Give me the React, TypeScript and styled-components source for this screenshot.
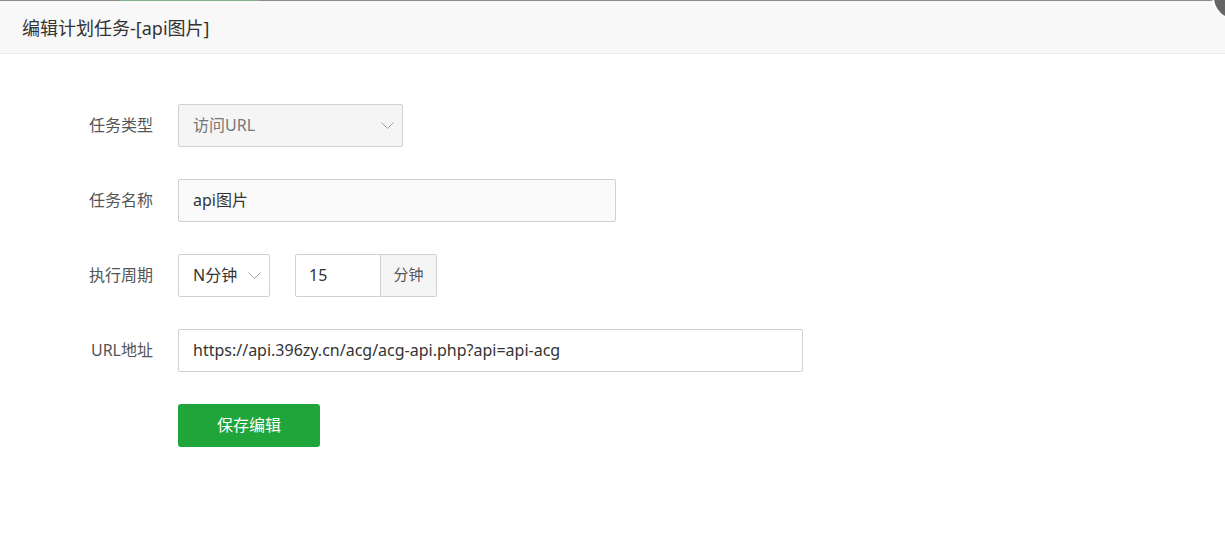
import React from 'react'
import styled, { createGlobalStyle } from 'styled-components'

const GlobalStyle = createGlobalStyle`
  html, body {
    margin: 0;
    padding: 0;
    background: #fff;
  }
  body {
    font-family: "Noto Sans", "Noto Sans CJK SC", sans-serif;
    color: #333;
  }
`

const Page = styled.div`
  position: relative;
  width: 1225px;
  height: 550px;
  overflow: hidden;
  background: #fff;
`

const TopStrip = styled.div`
  height: 1px;
  background: linear-gradient(
    to right,
    #8c8c8c 0,
    #8c8c8c 120px,
    #86b08a 120px,
    #86b08a 260px,
    #8c8c8c 260px
  );
`

const Header = styled.div`
  display: flex;
  align-items: center;
  height: 53px;
  padding-left: 22px;
  padding-bottom: 1px;
  box-sizing: border-box;
  background: #f8f8f8;
  border-bottom: 1px solid #eaeaea;
  font-size: 18px;
  color: #333;
`

const CloseDot = styled.div`
  position: absolute;
  top: -25px;
  right: -33px;
  width: 44px;
  height: 44px;
  border-radius: 50%;
  background: #666;
  box-shadow: 0 0 0 2px #fff;
`

const Form = styled.div`
  display: flex;
  flex-direction: column;
  gap: 32px;
  padding-top: 50px;
`

const Row = styled.div`
  display: flex;
  align-items: center;
`

const Label = styled.div`
  width: 153px;
  margin-right: 25px;
  text-align: right;
  font-size: 16px;
  line-height: 1;
  padding-bottom: 1px;
  color: #555;
`

const Field = styled.div<{ $w: number; $bg?: string; $muted?: boolean }>`
  box-sizing: border-box;
  position: relative;
  display: flex;
  align-items: center;
  width: ${(p) => p.$w}px;
  height: 43px;
  padding: 0 14px 2px;
  background: ${(p) => p.$bg || '#fff'};
  border: 1px solid #d0d0d0;
  border-radius: 2px;
  font-size: 16px;
  line-height: 1;
  color: ${(p) => (p.$muted ? '#777' : '#333')};
  white-space: nowrap;
`

const Caret = styled.svg`
  position: absolute;
  right: 8px;
  top: 50%;
  margin-top: -4px;
`

const Group = styled.div`
  display: flex;
  margin-left: 25px;
`

const GroupInput = styled(Field)`
  border-radius: 2px 0 0 2px;
  padding-left: 13px;
`

const Addon = styled.div`
  box-sizing: border-box;
  display: flex;
  align-items: center;
  justify-content: center;
  width: 56px;
  height: 43px;
  padding-bottom: 2px;
  background: #f5f5f5;
  border: 1px solid #d0d0d0;
  border-left: none;
  border-radius: 0 2px 2px 0;
  font-size: 15px;
  line-height: 1;
  color: #555;
`

const SaveButton = styled.button`
  width: 142px;
  height: 43px;
  margin-left: 178px;
  padding: 0 0 2px;
  border: none;
  border-radius: 3px;
  background: #20a53a;
  color: #fff;
  font-family: inherit;
  font-size: 16px;
  line-height: 1;
  cursor: pointer;
`

const Chevron = () => (
  <Caret width="13" height="8" viewBox="0 0 13 8">
    <polyline points="0.5,0.5 6.5,6.5 12.5,0.5" fill="none" stroke="#a0a0a0" strokeWidth="1" />
  </Caret>
)

export default function App() {
  return (
    <Page>
      <GlobalStyle />
      <TopStrip />
      <Header>编辑计划任务-[api图片]</Header>
      <CloseDot />
      <Form>
        <Row>
          <Label>任务类型</Label>
          <Field $w={225} $bg="#f5f5f5" $muted>
            访问URL
            <Chevron />
          </Field>
        </Row>
        <Row>
          <Label>任务名称</Label>
          <Field $w={438} $bg="#fafafa">
            api图片
          </Field>
        </Row>
        <Row>
          <Label>执行周期</Label>
          <Field $w={92}>
            N分钟
            <Chevron />
          </Field>
          <Group>
            <GroupInput $w={86}>15</GroupInput>
            <Addon>分钟</Addon>
          </Group>
        </Row>
        <Row>
          <Label>URL地址</Label>
          <Field $w={625}>https://api.396zy.cn/acg/acg-api.php?api=api-acg</Field>
        </Row>
        <Row>
          <SaveButton>保存编辑</SaveButton>
        </Row>
      </Form>
    </Page>
  )
}
